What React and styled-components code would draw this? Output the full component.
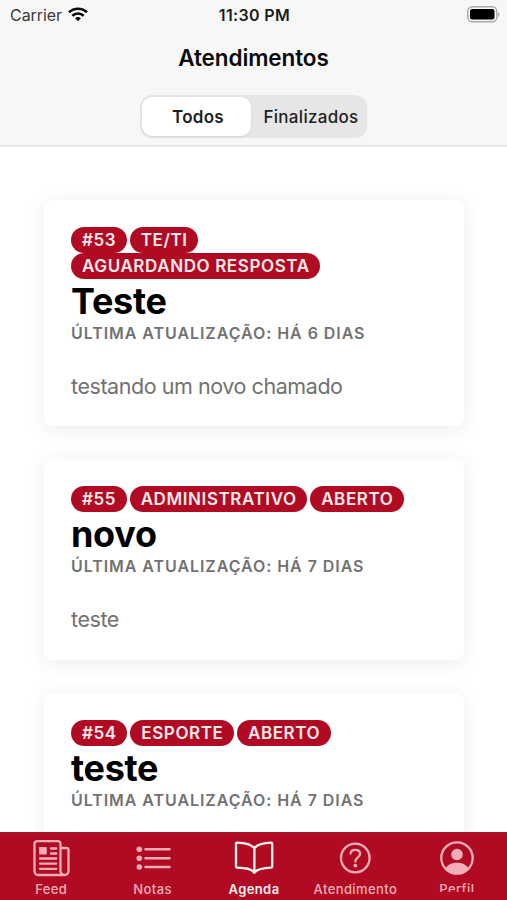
import React from "react";
import styled, { createGlobalStyle } from "styled-components";

const GlobalStyle = createGlobalStyle`
  * {
    box-sizing: border-box;
  }
  body {
    margin: 0;
    background-color: #fff;
    font-family: Inter, "Liberation Sans", sans-serif;
  }
`;

const Screen = styled.div`
  display: flex;
  flex-direction: column;
  height: 900px;
  overflow: hidden;
  background-color: #fff;
`;
const Header = styled.header`
  flex: none;
  height: 147px;
  background-color: #f7f7f7;
  border-bottom: 2px solid #e6e6e6;
`;
const StatusBar = styled.div`
  display: grid;
  grid-template-columns: 1fr auto 1fr;
  align-items: center;
  height: 29px;
  padding: 0 7px 0 10px;
`;
const Carrier = styled.div`
  display: flex;
  align-items: center;
  gap: 6px;
  font-size: 16px;
  letter-spacing: -0.05px;
  color: #3a3a3a;
`;
const Clock = styled.div`
  padding-right: 1px;
  font-size: 16px;
  font-weight: 600;
  letter-spacing: 0.35px;
  color: #1c1c1c;
`;
const BatterySlot = styled.div`
  display: flex;
  justify-content: flex-end;
`;
const ScreenTitle = styled.h1`
  margin: 0;
  padding-top: 14px;
  font-size: 22.5px;
  line-height: 30px;
  font-weight: 600;
  text-align: center;
  letter-spacing: -0.1px;
  color: #0a0a0a;
`;
const Segmented = styled.div`
  display: flex;
  width: 227px;
  height: 43px;
  margin: 22px auto 0;
  padding: 2px;
  border-radius: 12px;
  background-color: #e6e6e6;
`;
const Segment = styled.button`
  width: ${({ $active }) => ($active ? "109px" : "114px")};
  height: 39px;
  padding: ${({ $active }) => ($active ? "1px 0 0 3px" : "1px 0 0 6px")};
  border: none;
  border-radius: 10px;
  font: inherit;
  font-size: 17px;
  font-weight: ${({ $active }) => ($active ? 600 : 500)};
  letter-spacing: 0.3px;
  color: #1f1f1f;
  background-color: ${({ $active }) => ($active ? "#fff" : "transparent")};
  box-shadow: ${({ $active }) => ($active ? "0 1px 3px rgba(0, 0, 0, 0.08)" : "none")};
`;

const CardList = styled.main`
  flex: 1;
  min-height: 0;
  display: flex;
  flex-direction: column;
  gap: 33px;
  padding: 53px 43px 0 44px;
  overflow: hidden;
`;
const Card = styled.article`
  flex: none;
  padding: 27px 27px 26.4px;
  border-radius: 8px;
  background-color: #fff;
  box-shadow: 0 3px 20px rgba(0, 0, 0, 0.075);
`;
const TagRow = styled.div`
  display: flex;
  flex-wrap: wrap;
  column-gap: 3px;
`;
const Tag = styled.span`
  height: 26px;
  padding: 0 10.5px 0 11px;
  border-radius: 13px;
  font-size: 17px;
  line-height: 26px;
  font-weight: 600;
  letter-spacing: 0.6px;
  color: #fdeaec;
  background-color: #b00b22;
`;
const CardTitle = styled.h2`
  margin: 0;
  font-size: 36px;
  line-height: 44px;
  font-weight: 700;
  letter-spacing: -0.3px;
  color: #000;
`;
const Updated = styled.p`
  margin: 0;
  font-size: 16px;
  line-height: 20px;
  font-weight: 600;
  letter-spacing: 0.94px;
  color: #727272;
`;
const Description = styled.p`
  margin: 29px 0 0;
  font-size: 21.5px;
  line-height: 28px;
  letter-spacing: -0.44px;
  color: #727272;
`;

const TabBar = styled.nav`
  flex: none;
  display: grid;
  grid-template-columns: repeat(5, 1fr);
  height: 68px;
  background-color: #b00b22;
  border-top: 1px solid #9c1c2e;
`;
const TabItem = styled.div`
  display: flex;
  flex-direction: column;
  align-items: center;
  padding: 5px 0 0 1px;
  color: ${({ $active }) => ($active ? "#fff0f2" : "#f3aeb7")};
`;
const TabLabel = styled.span`
  height: ${({ $clipped }) => ($clipped ? "12px" : "17px")};
  margin-top: 2px;
  overflow: hidden;
  font-size: 13px;
  line-height: 18px;
  font-weight: ${({ $active }) => ($active ? 600 : 500)};
  letter-spacing: 0.4px;
`;

const WifiIcon = () => (
  <svg width="20" height="15" viewBox="0 0 20 15" fill="none" stroke="#0a0a0a" strokeWidth="2.6">
    <path d="M1 5.3C6 .6 14 .6 19 5.3" />
    <path d="M4.3 8.7c3.3-3 8.1-3 11.4 0" />
    <path d="M7.1 11.2c1.7-1.5 4.1-1.5 5.8 0L10 14.2z" fill="#0a0a0a" stroke="none" />
  </svg>
);

const BatteryIcon = () => (
  <svg width="33" height="17" viewBox="0 0 33 17">
    <rect x="0.8" y="0.8" width="29" height="15" rx="4.5" fill="#f7f7f7" stroke="#a9a9a9" strokeWidth="1.4" />
    <rect x="3" y="3" width="24.5" height="10.5" rx="2.2" fill="#000" />
    <path d="M31 6.2c1.8.6 1.8 4 0 4.6z" fill="#a9a9a9" />
  </svg>
);

const TabIcon = ({ children }) => (
  <svg
    width="40"
    height="40"
    viewBox="0 0 40 40"
    fill="none"
    stroke="currentColor"
    strokeWidth="2.3"
    strokeLinecap="round"
    strokeLinejoin="round"
  >
    {children}
  </svg>
);

const FeedIcon = () => (
  <TabIcon>
    <path d="M34.3 37H7.5a4 4 0 0 1-4-4V5.8a2.7 2.7 0 0 1 2.7-2.7h20.6a2.7 2.7 0 0 1 2.7 2.7v27a4.3 4.2 0 0 0 4.3 4.2 3.7 3.7 0 0 0 3.7-3.7V12a2 2 0 0 0-2-2h-6" />
    <path d="M20 10.5h5.300M20 15.500h5.300M9 20.500h16.300M9 25.700h16.300M9 30.800h16.300" />
    <rect x="8" y="9" width="7.8" height="7.5" rx="0.8" fill="currentColor" stroke="none" />
  </TabIcon>
);

const NotesIcon = () => (
  <TabIcon>
    <path d="M12.5 11.3h24M12.5 20.2h24M12.5 29h24" strokeWidth="2.5" />
    <g fill="currentColor" stroke="none">
      <circle cx="6.3" cy="11.3" r="2.8" />
      <circle cx="6.3" cy="20.2" r="2.8" />
      <circle cx="6.3" cy="29" r="2.8" />
    </g>
  </TabIcon>
);

const BookIcon = () => (
  <TabIcon>
    <path d="M20.4 10C17.2 6.3 11.200 4.800 3.200 4.600c-.8 0-1.200.5-1.200 1.200v22.700c0 .8.5 1.200 1.200 1.200 8.200.2 14 .8 17.200 5 3.200-4.200 9-4.800 16.600-5 .8 0 1.200-.4 1.200-1.200V5.800c0-.7-.4-1.200-1.200-1.200-7.600.2-13.400 1.700-16.600 5.400zM20.400 10v24.500" />
  </TabIcon>
);

const HelpIcon = () => (
  <TabIcon>
    <circle cx="20.3" cy="20" r="14.3" />
    <path d="M15.6 15.6c0-2.3 2-3.8 4.7-3.8s4.8 1.5 4.8 4c0 3.8-4.7 3.8-4.7 7.3v.4" />
    <circle cx="20.3" cy="27.6" r="1.9" fill="currentColor" stroke="none" />
  </TabIcon>
);

const ProfileIcon = () => (
  <TabIcon>
    <circle cx="20" cy="20" r="15.7" />
    <circle cx="20" cy="16.5" r="5.8" fill="currentColor" stroke="none" />
    <path d="M8.600 30.500c2-4 6.400-5.700 11.400-5.700s9.400 1.700 11.400 5.700A15.700 15.700 0 0 1 8.600 30.500z" fill="currentColor" stroke="none" />
  </TabIcon>
);

const tickets = [
  {
    id: 53,
    tags: ["TE/TI", "AGUARDANDO RESPOSTA"],
    title: "Teste",
    updated: "HÁ 6 DIAS",
    description: "testando um novo chamado",
  },
  {
    id: 55,
    tags: ["ADMINISTRATIVO", "ABERTO"],
    title: "novo",
    updated: "HÁ 7 DIAS",
    description: "teste",
  },
  {
    id: 54,
    tags: ["ESPORTE", "ABERTO"],
    title: "teste",
    updated: "HÁ 7 DIAS",
  },
];

const tabs = [
  { label: "Feed", Icon: FeedIcon },
  { label: "Notas", Icon: NotesIcon },
  { label: "Agenda", Icon: BookIcon, active: true },
  { label: "Atendimento", Icon: HelpIcon },
  { label: "Perfil", Icon: ProfileIcon, clipped: true },
];

const TicketCard = ({ ticket }) => (
  <Card>
    <TagRow>
      <Tag>#{ticket.id}</Tag>
      {ticket.tags.map((tag) => (
        <Tag key={tag}>{tag}</Tag>
      ))}
    </TagRow>
    <CardTitle>{ticket.title}</CardTitle>
    <Updated>ÚLTIMA ATUALIZAÇÃO: {ticket.updated}</Updated>
    <Description>{ticket.description}</Description>
  </Card>
);

const App = () => {
  return (
    <Screen>
      <GlobalStyle />
      <Header>
        <StatusBar>
          <Carrier>
            Carrier
            <WifiIcon />
          </Carrier>
          <Clock>11:30 PM</Clock>
          <BatterySlot>
            <BatteryIcon />
          </BatterySlot>
        </StatusBar>
        <ScreenTitle>Atendimentos</ScreenTitle>
        <Segmented>
          <Segment $active>Todos</Segment>
          <Segment>Finalizados</Segment>
        </Segmented>
      </Header>
      <CardList>
        {tickets.map((ticket) => (
          <TicketCard key={ticket.id} ticket={ticket} />
        ))}
      </CardList>
      <TabBar>
        {tabs.map(({ label, Icon, active, clipped }) => (
          <TabItem key={label} $active={active}>
            <Icon />
            <TabLabel $active={active} $clipped={clipped}>
              {label}
            </TabLabel>
          </TabItem>
        ))}
      </TabBar>
    </Screen>
  );
};

export default App;
